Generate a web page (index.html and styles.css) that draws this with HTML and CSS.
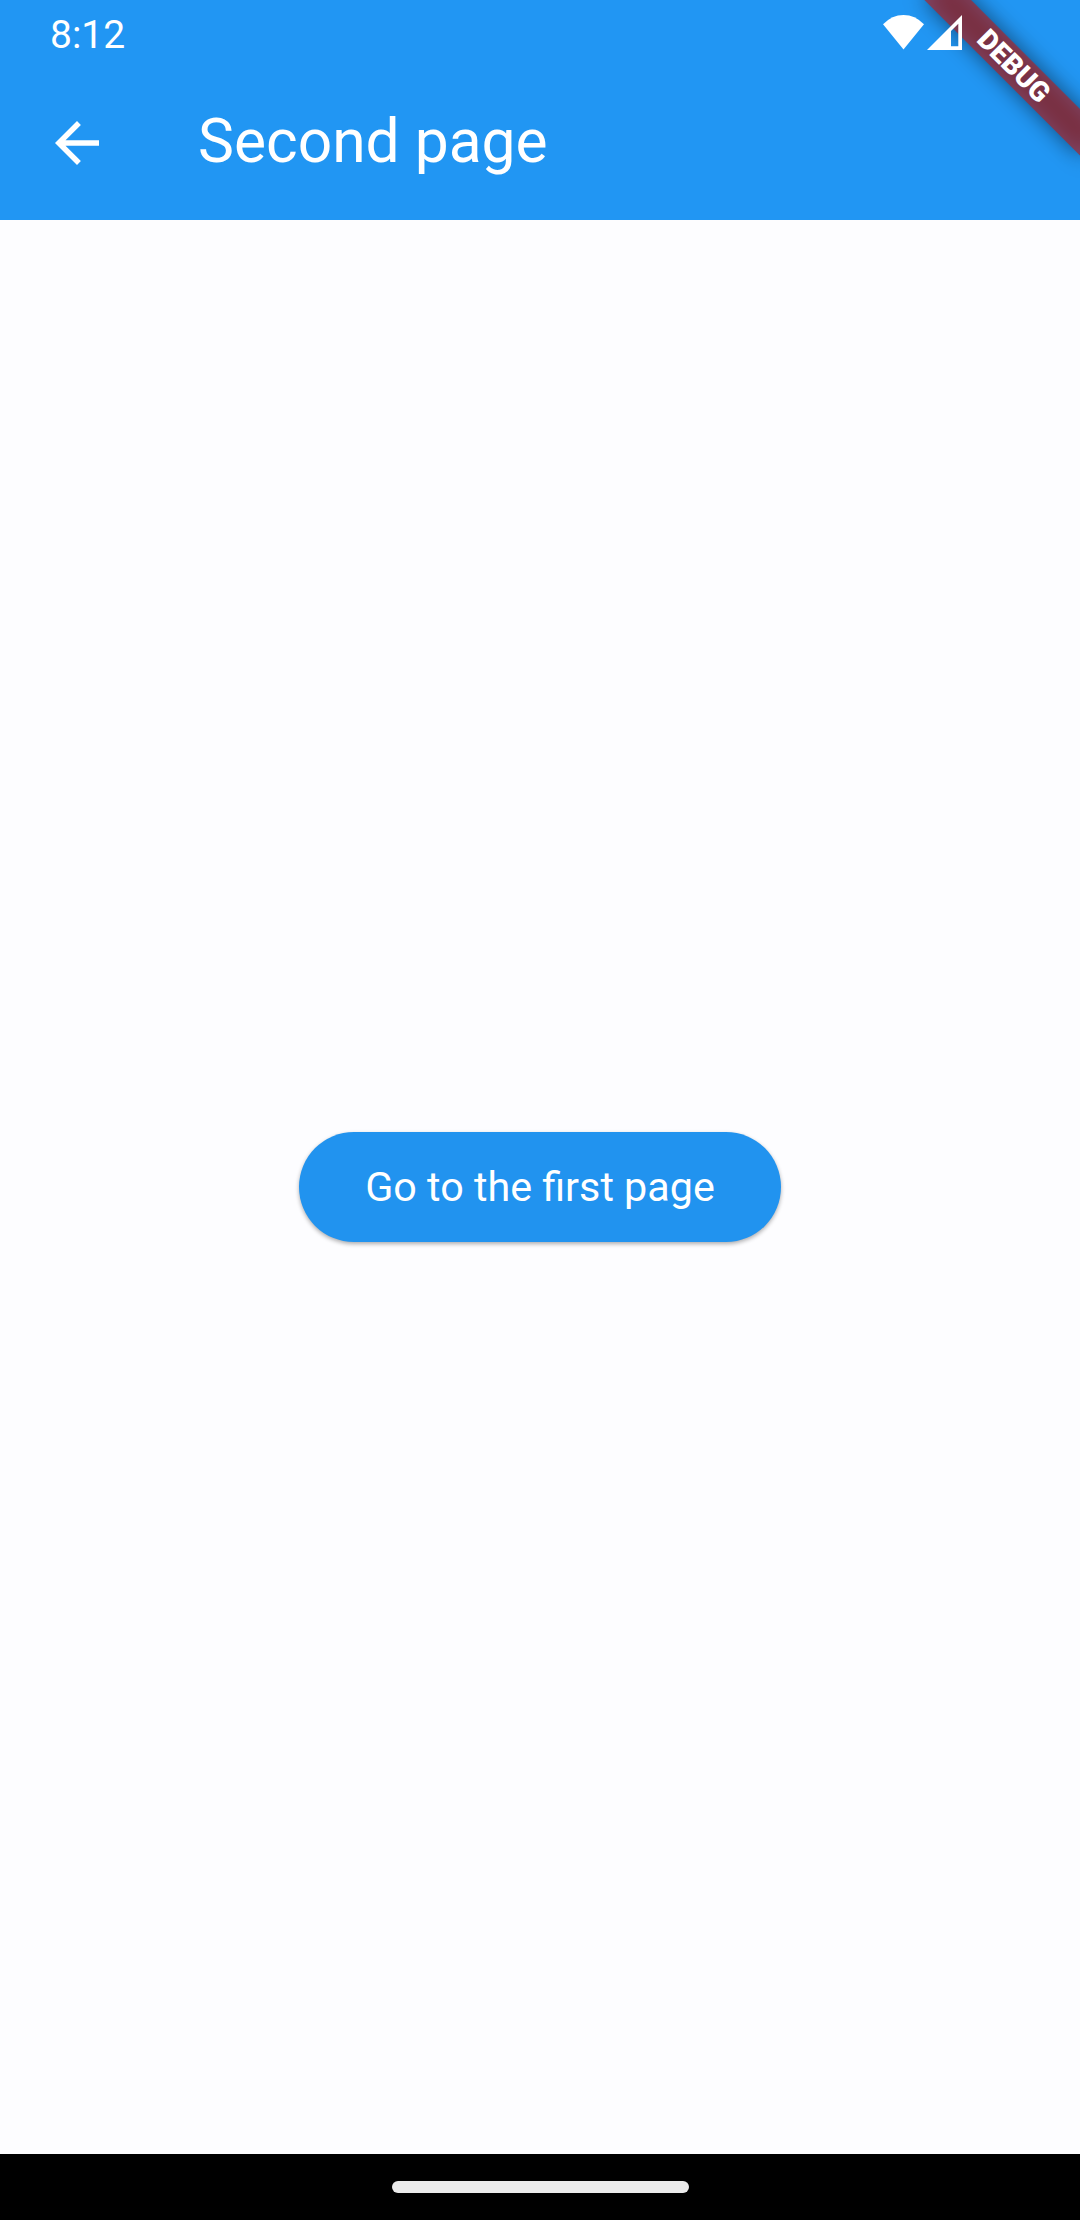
FILE: index.html
```html
<!DOCTYPE html>
<html lang="en">
<head>
<meta charset="utf-8">
<title>Second page</title>
<link rel="stylesheet" href="styles.css">
</head>
<body>
<div class="screen">
  <header class="header">
    <div class="status-bar">
      <span class="clock">8:12</span>
      <div class="status-icons">
        <svg class="wifi" width="41" height="35" viewBox="0 0 41 35"><path d="M0 9.3Q9 0 20.5 0T41 9.3L20.5 34.5Z" fill="#fff"/></svg>
        <svg class="signal" width="35" height="35" viewBox="0 0 35 35"><path fill-rule="evenodd" d="M35 0V35H0ZM31.3 8.8L24 16V31.3H31.3Z" fill="#fff"/></svg>
      </div>
    </div>
    <div class="app-bar">
      <svg class="back" width="66" height="66" viewBox="0 0 24 24"><path d="M20 11H7.83l5.59-5.59L12 4l-8 8 8 8 1.41-1.41L7.83 13H20z" fill="#fff"/></svg>
      <h1 class="title">Second page</h1>
    </div>
    <div class="banner-corner">
      <div class="banner-shadow"></div>
      <div class="banner">DEBUG</div>
    </div>
  </header>
  <main class="content">
    <button class="button">Go to the first page</button>
  </main>
  <footer class="nav-bar"><div class="handle"></div></footer>
</div>
</body>
</html>
```
FILE: styles.css
```css
* { box-sizing: border-box; }
body { margin: 0; font-family: Roboto, sans-serif; color: #fff; }
.screen { width: 1080px; height: 2220px; display: flex; flex-direction: column; background: #fdfdff; }
.header { position: relative; height: 220px; background: #2196f3; overflow: hidden; }
.status-bar { position: relative; z-index: 2; height: 66px; padding: 0 118px 0 50px; display: flex; justify-content: space-between; align-items: flex-start; }
.clock { font-size: 39px; line-height: 46px; padding-top: 12px; }
.status-icons { display: flex; gap: 3px; padding-top: 15px; }
.app-bar { height: 154px; padding-left: 44px; display: flex; align-items: center; gap: 88px; }
.back { display: block; }
.title { margin: 0; padding-bottom: 4px; font-size: 60.5px; line-height: 77px; font-weight: 400; }
/* Corner ribbon: rotated about the top-right corner of the screen */
.banner-corner { position: absolute; left: 100%; top: 0; width: 0; height: 0; transform: rotate(45deg); transform-origin: 0 0; }
.banner, .banner-shadow { position: absolute; left: -110px; top: 77px; width: 220px; height: 33px; }
.banner-shadow { background: rgba(0, 0, 0, .5); filter: blur(10.9px); }
.banner { background: rgba(183, 28, 28, .627); text-align: center; font-size: 28.05px; line-height: 33px; font-weight: 900; }
.content { flex: 1; display: flex; align-items: center; justify-content: center; }
.button { width: 482px; height: 110px; padding: 0; border: 0; border-radius: 55px; background: #2193ef; color: #fff; font: 400 41.25px/55px Roboto, sans-serif; box-shadow: 0 2px 4px rgba(0, 0, 0, .32); }
.nav-bar { height: 66px; background: #000; display: flex; justify-content: center; align-items: center; }
.handle { width: 297px; height: 12px; border-radius: 6px; background: #ebebeb; }
```
